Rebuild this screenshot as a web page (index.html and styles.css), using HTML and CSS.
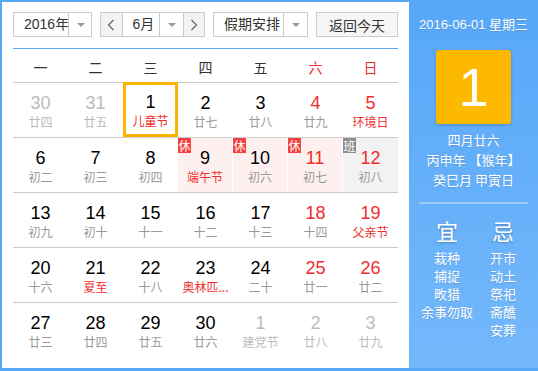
FILE: index.html
```html
<!DOCTYPE html>
<html lang="zh-CN">
<head>
  <meta charset="UTF-8" />
  <meta name="viewport" content="width=device-width, initial-scale=1" />
  <title>万年历</title>
  <link rel="stylesheet" href="styles.css">
</head>
<body>
  <div class="calendar">
    <div class="main">
      <div class="toolbar">
        <div class="select year">
          <span class="select-text">2016年</span>
          <span class="select-arrow"></span>
        </div>
        <div class="month-group">
          <span class="nav-btn">
            <svg width="8" height="12" viewBox="0 0 8 12"><polyline points="6.5,1 1.5,6 6.5,11" fill="none" stroke="#666" stroke-width="1.2"/></svg>
          </span>
          <div class="select month">
            <span class="select-text">6月</span>
            <span class="select-arrow"></span>
          </div>
          <span class="nav-btn">
            <svg width="8" height="12" viewBox="0 0 8 12"><polyline points="1.5,1 6.5,6 1.5,11" fill="none" stroke="#666" stroke-width="1.2"/></svg>
          </span>
        </div>
        <div class="select holiday">
          <span class="select-text">假期安排</span>
          <span class="select-arrow"></span>
        </div>
        <button class="today-btn">返回今天</button>
      </div>

      <div class="week-head">
        <span>一</span><span>二</span><span>三</span><span>四</span><span>五</span>
        <span class="red">六</span><span class="red">日</span>
      </div>
      <div class="days" id="days"></div>
    </div>

    <div class="panel">
      <div class="panel-date">2016-06-01 星期三</div>
      <div class="big-day">1</div>
      <div class="lunar-info">
        <p>四月廿六</p>
        <p>丙申年 【猴年】</p>
        <p>癸巳月 甲寅日</p>
      </div>
      <div class="panel-line"></div>
      <div class="advice">
        <div class="advice-col">
          <div class="advice-title">宜</div>
          <p>栽种</p>
          <p>捕捉</p>
          <p>畋猎</p>
          <p>余事勿取</p>
        </div>
        <div class="advice-col">
          <div class="advice-title">忌</div>
          <p>开市</p>
          <p>动土</p>
          <p>祭祀</p>
          <p>斋醮</p>
          <p>安葬</p>
        </div>
      </div>
    </div>
  </div>

  <script>
    // 每格: 日期, 农历/节日, 标记
    // o = 非本月, w = 周末, f = 节日, t = 今天, r = 休, b = 班
    const days = [
      ["30", "廿四", "o"], ["31", "廿五", "o"], ["1", "儿童节", "f t"], ["2", "廿七", ""], ["3", "廿八", ""], ["4", "廿九", "w"], ["5", "环境日", "w f"],
      ["6", "初二", ""], ["7", "初三", ""], ["8", "初四", ""], ["9", "端午节", "f r"], ["10", "初六", "r"], ["11", "初七", "w r"], ["12", "初八", "w b"],
      ["13", "初九", ""], ["14", "初十", ""], ["15", "十一", ""], ["16", "十二", ""], ["17", "十三", ""], ["18", "十四", "w"], ["19", "父亲节", "w f"],
      ["20", "十六", ""], ["21", "夏至", "f"], ["22", "十八", ""], ["23", "奥林匹...", "f"], ["24", "二十", ""], ["25", "廿一", "w"], ["26", "廿二", "w"],
      ["27", "廿三", ""], ["28", "廿四", ""], ["29", "廿五", ""], ["30", "廿六", ""], ["1", "建党节", "o"], ["2", "廿八", "o"], ["3", "廿九", "o"]
    ];

    const flagClass = { o: "other", w: "weekend", f: "fest", t: "today", r: "rest", b: "work" };
    const daysBox = document.getElementById("days");

    days.forEach(function (d) {
      const cell = document.createElement("div");
      cell.className = "day";
      d[2].split(" ").forEach(function (f) {
        if (f) cell.classList.add(flagClass[f]);
      });

      if (d[2].indexOf("r") >= 0 || d[2].indexOf("b") >= 0) {
        const badge = document.createElement("span");
        badge.className = "badge";
        badge.textContent = d[2].indexOf("r") >= 0 ? "休" : "班";
        cell.appendChild(badge);
      }

      const num = document.createElement("div");
      num.className = "num";
      num.textContent = d[0];
      const lunar = document.createElement("div");
      lunar.className = "lunar";
      lunar.textContent = d[1];

      cell.appendChild(num);
      cell.appendChild(lunar);
      daysBox.appendChild(cell);
    });
  </script>
</body>
</html>
```

FILE: styles.css
```css
* {
  box-sizing: border-box;
}

body {
  margin: 0;
  font-family: "Liberation Sans", "Noto Sans CJK SC", sans-serif;
  background-color: #fff;
}

.calendar {
  display: flex;
  width: 538px;
  height: 371px;
  border: 2px solid #57a7f7;
  border-right: none;
  border-bottom-width: 3px;
}

.main {
  width: 407px;
  padding: 10px 11px 0 11px;
  background-color: #fff;
}

/* 顶部工具栏 */
.toolbar {
  display: flex;
  justify-content: space-between;
  height: 25px;
  margin-bottom: 11px;
  font-size: 14px;
  color: #333;
}

.select {
  display: flex;
  height: 25px;
  border: 1px solid #ccc;
  background-color: #fff;
}

.select-text {
  padding-left: 10px;
  line-height: 23px;
  white-space: nowrap;
}

.select-arrow {
  position: relative;
  width: 24px;
  border-left: 1px solid #ccc;
}

.select-arrow::after {
  content: "";
  position: absolute;
  left: 8px;
  top: 10px;
  border-left: 4px solid transparent;
  border-right: 4px solid transparent;
  border-top: 4px solid #999;
}

.year {
  width: 79px;
}

.year .select-text {
  width: 54px;
}

.month-group {
  display: flex;
  width: 105px;
  height: 25px;
  border: 1px solid #ccc;
}

.month-group .select {
  border: none;
  border-left: 1px solid #ccc;
  border-right: 1px solid #ccc;
  height: 23px;
}

.month .select-text {
  width: 36px;
}

.nav-btn {
  display: flex;
  align-items: center;
  justify-content: center;
  width: 21px;
  background-color: #f3f3f3;
}

.holiday {
  width: 95px;
}

.holiday .select-text {
  width: 70px;
}

.today-btn {
  width: 82px;
  height: 25px;
  padding: 0;
  border: 1px solid #ccc;
  background-color: #f6f6f6;
  font-family: "Noto Sans CJK SC", sans-serif;
  font-size: 14px;
  color: #333;
}

/* 星期表头 */
.week-head {
  display: grid;
  grid-template-columns: repeat(7, 55px);
  height: 34px;
  border-top: 1px solid #5aa8f7;
  font-family: "Noto Sans CJK SC", sans-serif;
  font-size: 14px;
  color: #333;
  text-align: center;
}

.week-head span {
  line-height: 36px;
}

.red {
  color: #f02c2c;
}

/* 日期格子 */
.days {
  display: grid;
  grid-template-columns: repeat(7, 55px);
  grid-auto-rows: 55px;
}

.day {
  position: relative;
  border-top: 1px solid #ccc;
  padding-top: 10px;
  text-align: center;
}

.num {
  font-size: 18px;
  line-height: 20px;
  margin-bottom: 1px;
  color: #000;
}

.lunar {
  font-family: "Noto Sans CJK SC", sans-serif;
  font-size: 12px;
  line-height: 16px;
  color: #999;
  white-space: nowrap;
}

.weekend .num {
  color: #f02c2c;
}

.fest .lunar {
  color: #f02c2c;
}

.other .num,
.other .lunar {
  color: #bbb;
}

.today {
  border: 3px solid #fbb400;
  padding-top: 7px;
}

.rest {
  background-color: #fff0f0;
  border-right: 1px solid #fff;
}

.work {
  background-color: #f2f2f2;
}

.badge {
  position: absolute;
  left: 0;
  top: 0;
  width: 13px;
  height: 15px;
  font-family: "Noto Sans CJK SC", sans-serif;
  font-size: 12px;
  line-height: 15px;
  color: #fff;
  background-color: #f44040;
}

.work .badge {
  background-color: #8c8c8c;
}

/* 右侧面板 */
.panel {
  width: 129px;
  padding-top: 14px;
  background: linear-gradient(#57a7f8, #74b8fb);
  font-family: "Noto Sans CJK SC", sans-serif;
  color: #fff;
  text-align: center;
  text-shadow: 0 1px 1px rgba(0, 0, 0, 0.12);
}

.panel-date {
  font-family: "Liberation Sans", "Noto Sans CJK SC", sans-serif;
  font-size: 13px;
  line-height: 18px;
}

.big-day {
  width: 75px;
  height: 74px;
  margin: 16px auto 0 auto;
  border-radius: 3px;
  background-color: #fdb800;
  box-shadow: 0 1px 3px rgba(0, 0, 0, 0.2);
  font-family: "Liberation Sans", sans-serif;
  font-size: 54px;
  line-height: 74px;
  text-shadow: none;
}

.lunar-info {
  margin-top: 6px;
  font-size: 13px;
}

.lunar-info p {
  margin: 0;
  line-height: 20px;
}

.panel-line {
  width: 109px;
  height: 2px;
  margin: 12px auto 0 auto;
  background-color: #9ccbfb;
}

.advice {
  display: grid;
  grid-template-columns: 56px 56px;
  padding-left: 10px;
  margin-top: 12px;
}

.advice-title {
  font-size: 22px;
  line-height: 28px;
  margin-bottom: 5px;
  text-shadow: 0 1px 2px rgba(0, 0, 0, 0.25);
}

.advice-col p {
  margin: 0;
  font-size: 13px;
  line-height: 18px;
  white-space: nowrap;
}
```
